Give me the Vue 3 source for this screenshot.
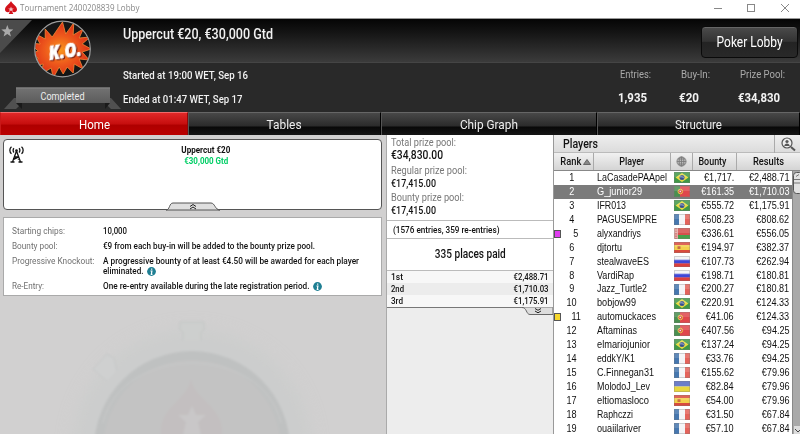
<script setup>
  import { ref } from 'vue';

  // squeeze a label horizontally so it takes the given width
  const vFit = {
    mounted(el, { value }) {
      const width = el.getBoundingClientRect().width;
      if (value && width) el.style.transform = `scaleX(${value / width})`;
    },
  };

  const stats = [
    { label: 'Entries:', value: '1,935', lw: 31, vw: 29 },
    { label: 'Buy-In:', value: '€20', lw: 29, vw: 20 },
    { label: 'Prize Pool:', value: '€34,830', lw: 45, vw: 42 },
  ];

  const activeTab = ref('Home');
  const tabs = [
    { name: 'Home', w: 31 },
    { name: 'Tables', w: 35 },
    { name: 'Chip Graph', w: 58 },
    { name: 'Structure', w: 47 },
  ];

  const pools = [
    { label: 'Total prize pool:', value: '€34,830.00', lw: 65, vw: 52 },
    { label: 'Regular prize pool:', value: '€17,415.00', lw: 76, vw: 45 },
    { label: 'Bounty prize pool:', value: '€17,415.00', lw: 73, vw: 45 },
  ];

  const places = [
    { place: '1st', prize: '€2,488.71', w: 12 },
    { place: '2nd', prize: '€1,710.03', w: 13 },
    { place: '3rd', prize: '€1,175.91', w: 12 },
  ];

  const players = [
    { name: 'LaCasadePAApel', w: 70, flag: 'br', bounty: '€1,717.', result: '€2,488.71' },
    { name: 'G_junior29', w: 45, flag: 'pt', bounty: '€161.35', result: '€1,710.03', selected: true },
    { name: 'IFR013', w: 29, flag: 'br', bounty: '€555.72', result: '€1,175.91' },
    { name: 'PAGUSEMPRE', w: 60, flag: 'fr', bounty: '€508.23', result: '€808.62' },
    { name: 'alyxandriys', w: 44, flag: 'by', bounty: '€336.61', result: '€556.05', mark: 'purple' },
    { name: 'djtortu', w: 25, flag: 'es', bounty: '€194.97', result: '€382.37' },
    { name: 'stealwaveES', w: 52, flag: 'ru', bounty: '€107.73', result: '€262.94' },
    { name: 'VardiRap', w: 37, flag: 'ru', bounty: '€198.71', result: '€180.81' },
    { name: 'Jazz_Turtle2', w: 50, flag: 'fr', bounty: '€200.27', result: '€180.81' },
    { name: 'bobjow99', w: 39, flag: 'br', bounty: '€220.91', result: '€124.33' },
    { name: 'automuckaces', w: 59, flag: 'pt', bounty: '€41.06', result: '€124.33', mark: 'yellow' },
    { name: 'Aftaminas', w: 40, flag: 'pt', bounty: '€407.56', result: '€94.25' },
    { name: 'elmariojunior', w: 53, flag: 'br', bounty: '€137.24', result: '€94.25' },
    { name: 'eddkY/K1', w: 38, flag: 'fr', bounty: '€33.76', result: '€94.25' },
    { name: 'C.Finnegan31', w: 57, flag: 'fr', bounty: '€155.62', result: '€79.96' },
    { name: 'MolodoJ_Lev', w: 53, flag: 'ua', bounty: '€82.84', result: '€79.96' },
    { name: 'eltiomasloco', w: 52, flag: 'es', bounty: '€54.00', result: '€79.96' },
    { name: 'Raphczzi', w: 36, flag: 'fr', bounty: '€31.50', result: '€67.84' },
    { name: 'ouaiilariver', w: 44, flag: 'fr', bounty: '€57.10', result: '€67.84' },
  ];
</script>

<template>
  <div class="window">
    <div class="titlebar">
      <svg class="spade" width="12" height="14" viewBox="0 0 12 14">
        <path d="M6 0C7 3 12 5 12 8.500c0 3-3.500 3.500-5 1.800L8.300 13H3.700L5 10.300C3.500 12 0 11.500 0 8.500 0 5 5 3 6 0Z" fill="#d3121b" />
        <path d="M6 5.500l.8 2h2l-1.600 1.200.6 1.900L6 9.500l-1.800 1.100.6-1.900L3.200 7.500h2Z" fill="#fff" opacity=".75" />
      </svg>
      <span v-fit="119.5" class="t title">Tournament 2400208839 Lobby</span>
      <svg class="controls" width="78" height="10" viewBox="0 0 78 10" fill="none" stroke="#888" stroke-width="1">
        <path d="M1 5.500h8M68 1l8 8M76 1l-8 8" />
        <rect x="34.500" y="1.500" width="7" height="7" />
      </svg>
    </div>

    <header class="header">
      <div class="brand">
        <svg width="122" height="92" viewBox="0 0 122 92">
          <defs>
            <radialGradient id="boom">
              <stop offset="0" stop-color="#f9961c" />
              <stop offset=".5" stop-color="#ee5a1c" />
              <stop offset="1" stop-color="#dc2e17" />
            </radialGradient>
            <linearGradient id="ribbon" x2="0" y2="1">
              <stop offset="0" stop-color="#737373" />
              <stop offset="1" stop-color="#5c5c5c" />
            </linearGradient>
            <clipPath id="disc"><circle cx="62.500" cy="29" r="27.500" /></clipPath>
          </defs>
          <path d="M0 0h32L0 33Z" fill="#4b4b4b" />
          <path d="M7.300 5l1.600 4.200 4.400.2-3.500 2.800 1.200 4.300-3.700-2.400-3.700 2.400 1.200-4.300L1.300 9.400l4.400-.2Z" fill="#aaa" />
          <circle cx="62.500" cy="29" r="27.500" fill="#151515" />
          <path clip-path="url(#disc)" d="M62.500 2l3.200 12 8-11-.5 12 10-6-4 9 11-1-8 7 9 5-9 3 7 8-10-1 4 10-9-5-1 9-6-6-4 7-4-7-6 11-2-10-10 6 2-10-10 2 5-8-9-4 9-3-9-8 11 1-6-11 11 6 0-10 7 8Z" fill="url(#boom)" stroke="#f58a35" stroke-width=".8" />
          <circle cx="62.500" cy="29" r="27.800" fill="none" stroke="#9c9c9c" stroke-width="1.200" />
          <g transform="rotate(-8 64 31)">
            <text x="48.500" y="38" textLength="33" lengthAdjust="spacingAndGlyphs" class="ko">K.O.</text>
          </g>
          <path d="M4 89l10-11h8v5l-6 6ZM121 89l-10-11h-6v5l6 6Z" fill="#505050" />
          <path d="M16 83l6 6v-6ZM110 83l-5 6v-6Z" fill="#191919" />
          <path d="M16 67.500h94v15.500H16Z" fill="url(#ribbon)" />
          <path d="M16 68h94" stroke="#858585" />
          <text x="40.500" y="79.500" textLength="44" lengthAdjust="spacingAndGlyphs" class="completed">Completed</text>
        </svg>
      </div>
      <div class="about">
        <div class="name"><span v-fit="150" class="t">Uppercut €20, €30,000 Gtd</span></div>
        <div class="when"><span v-fit="125" class="t">Started at 19:00 WET, Sep 16</span></div>
        <div class="when"><span v-fit="119.5" class="t">Ended at 01:47 WET, Sep 17</span></div>
      </div>
      <div class="summary">
        <button class="lobby"><span v-fit="66" class="t">Poker Lobby</span></button>
        <div class="stats">
          <div v-for="s in stats" :key="s.label" class="stat">
            <div class="stat-label"><span v-fit="s.lw" class="t">{{ s.label }}</span></div>
            <div class="stat-value"><span v-fit="s.vw" class="t">{{ s.value }}</span></div>
          </div>
        </div>
      </div>
    </header>

    <nav class="tabs">
      <div
        v-for="tab in tabs"
        :key="tab.name"
        class="tab"
        :class="{ active: tab.name === activeTab }"
        @click="activeTab = tab.name"
      >
        <span v-fit="tab.w" class="t">{{ tab.name }}</span>
      </div>
    </nav>

    <main class="content">
      <section class="left">
        <svg class="watch" width="386" height="140" viewBox="0 0 386 140">
          <defs>
            <filter id="soft"><feGaussianBlur stdDeviation="1" /></filter>
            <filter id="glow" x="-50%" y="-50%" width="200%" height="200%"><feGaussianBlur stdDeviation="9" /></filter>
          </defs>
          <circle cx="192" cy="154" r="119" fill="#c8cbca" opacity=".6" filter="url(#glow)" />
          <g filter="url(#soft)">
            <path d="M180 27h24v8l-3 2v10h-18V37l-3-2Z" fill="#cdcfce" stroke="#c3c5c4" />
            <path d="M93 74l14-15 7 4 3 14-9 10Z" fill="#cfd0d0" stroke="#c5c7c7" />
            <circle cx="192" cy="154" r="109" fill="#cccdcd" />
            <circle cx="192" cy="154" r="98" fill="#bfc1c1" />
            <circle cx="192" cy="154" r="89" fill="#c3c3c3" />
            <path d="M103 128C122 48 262 48 281 128" fill="none" stroke="#c9caca" />
            <path d="M191 84c3 20 31 28 31 52v8h-61v-8c0-24 27-32 30-52Z" fill="#c3bfc0" />
            <path d="M192 111l4 9h10l-8 7 3 13h-18l3-13-8-7h10Z" fill="#c9c7c8" />
          </g>
        </svg>

        <div class="card">
          <svg class="antenna" width="15" height="17" viewBox="0 0 15 17" fill="none" stroke="#111" stroke-width="1.300">
            <path d="M7.500 5L3.500 16M7.500 5l4 11M5.500 11h4M4.200 13.700l5.500-2.700M10.800 13.700l-5-2.700M1.500 16h4M9.500 16h4" />
            <path d="M2.500.8C.3 2.500.3 6 2.500 7.800M5 2.200C3.800 3.200 3.800 5.300 5 6.400M12.500.8c2.200 1.700 2.200 5.200 0 7M10 2.200c1.200 1 1.200 3.100 0 4.200" />
            <circle cx="7.500" cy="4.500" r="1.300" fill="#111" stroke="none" />
          </svg>
          <div class="card-title"><span v-fit="49" class="t">Uppercut €20</span></div>
          <div class="card-gtd"><span v-fit="44" class="t">€30,000 Gtd</span></div>
          <svg class="handle" width="54" height="9" viewBox="0 0 54 9">
            <path d="M0 8c4 0 3-7 7-7h38c4 0 4 7 9 7Z" fill="#dfdfdf" stroke="#555" />
            <path d="M24 4.500l3-2 3 2M24 7l3-2 3 2" fill="none" stroke="#222" />
          </svg>
        </div>

        <dl class="facts">
          <dt><span v-fit="53" class="t">Starting chips:</span></dt>
          <dd><span v-fit="24" class="t">10,000</span></dd>
          <dt><span v-fit="45.5" class="t">Bounty pool:</span></dt>
          <dd><span v-fit="212" class="t">€9 from each buy-in will be added to the bounty prize pool.</span></dd>
          <dt><span v-fit="82.5" class="t">Progressive Knockout:</span></dt>
          <dd>
            <div><span v-fit="256" class="t">A progressive bounty of at least €4.50 will be awarded for each player</span></div>
            <div class="with-info second">
              <span v-fit="40.5" class="t">eliminated.</span>
              <svg class="info" width="9" height="9" viewBox="0 0 9 9">
                <circle cx="4.500" cy="4.500" r="4.400" fill="#1f7f93" />
                <path d="M3.500 4h1.400L4.300 7.300h1.200M4.700 1.600v1.200" stroke="#fff" stroke-width="1.200" fill="none" />
              </svg>
            </div>
          </dd>
          <dt><span v-fit="32" class="t">Re-Entry:</span></dt>
          <dd class="with-info third">
            <span v-fit="206.5" class="t">One re-entry available during the late registration period.</span>
            <svg class="info" width="9" height="9" viewBox="0 0 9 9">
              <circle cx="4.500" cy="4.500" r="4.400" fill="#1f7f93" />
              <path d="M3.500 4h1.400L4.300 7.300h1.200M4.700 1.600v1.200" stroke="#fff" stroke-width="1.200" fill="none" />
            </svg>
          </dd>
        </dl>
      </section>

      <section class="middle">
        <div class="pools">
          <template v-for="(p, i) in pools" :key="p.label">
            <div class="pool-label"><span v-fit="p.lw" class="t">{{ p.label }}</span></div>
            <div class="pool-value" :class="{ big: i === 0 }"><span v-fit="p.vw" class="t">{{ p.value }}</span></div>
          </template>
        </div>
        <div class="entries"><span v-fit="106.5" class="t">(1576 entries, 359 re-entries)</span></div>
        <div class="paid"><span v-fit="71" class="t">335 places paid</span></div>
        <div class="places">
          <div v-for="p in places" :key="p.place" class="place">
            <span v-fit="p.w" class="t">{{ p.place }}</span>
            <span v-fit="35" class="t right">{{ p.prize }}</span>
          </div>
        </div>
        <svg class="more" width="31" height="9" viewBox="0 0 31 9">
          <path d="M0 .5c5 0 4 7 8 7h23V.5" fill="#ddd" stroke="#666" />
          <path d="M13 1.500l3 1.800 3-1.800M13 4l3 1.800 3-1.800" fill="none" stroke="#222" />
        </svg>
      </section>

      <section class="right-col">
        <div class="players-head">
          <span v-fit="35" class="t">Players</span>
          <svg class="search" width="26" height="18" viewBox="0 0 26 18">
            <path d="M.5 0v18" stroke="#aaa" />
            <circle cx="13" cy="8" r="5" fill="#eee" stroke="#555" stroke-width="1.200" />
            <circle cx="13" cy="6.500" r="1.600" fill="#555" />
            <path d="M10.300 11c0-3.500 5.400-3.500 5.400 0" fill="#555" />
            <path d="M17 12l4 3.500" stroke="#555" stroke-width="2" />
          </svg>
        </div>
        <div class="cols head">
          <div class="th rank-h">
            <span v-fit="21" class="t">Rank</span>
            <svg width="8" height="6" viewBox="0 0 8 6"><path d="M.5 5.500L4 .5l3.500 5Z" fill="#888" stroke="#666" /></svg>
          </div>
          <div class="th"><span v-fit="25" class="t">Player</span></div>
          <div class="th">
            <svg width="11" height="11" viewBox="0 0 11 11" fill="#bbb" stroke="#777" stroke-width=".8">
              <circle cx="5.500" cy="5.500" r="4.600" />
              <path d="M1 5.500h9M5.500 1v9M2 3h7M2 8h7" />
              <ellipse cx="5.500" cy="5.500" rx="2.300" ry="4.600" fill="none" />
            </svg>
          </div>
          <div class="th bounty-h"><span v-fit="28" class="t">Bounty</span></div>
          <div class="th results-h"><span v-fit="31" class="t">Results</span></div>
        </div>
        <div class="list">
          <div class="rows">
            <div v-for="(p, i) in players" :key="p.name" class="cols row" :class="{ selected: p.selected }">
              <div class="rank" :class="{ marked: p.mark }">
                <i v-if="p.mark" class="mark" :class="p.mark"></i>
                <span class="t narrow">{{ i + 1 }}</span>
              </div>
              <div class="player"><span v-fit="p.w" class="t">{{ p.name }}</span></div>
              <svg class="flag" width="16" height="11" viewBox="0 0 16 11">
                <template v-if="p.flag === 'br'">
                  <path d="M0 0h16v11H0Z" fill="#409847" />
                  <path d="M1.500 5.500L8 1l6.500 4.500L8 10Z" fill="#e8dc45" />
                  <circle cx="8" cy="5.500" r="2.500" fill="#38508f" />
                  <path d="M5.800 5c2-.4 3.500.2 4.400 1.300" stroke="#cfd8de" stroke-width=".6" fill="none" />
                </template>
                <template v-else-if="p.flag === 'pt'">
                  <path d="M0 0h16v11H0Z" fill="#e0474d" />
                  <path d="M0 0h6v11H0Z" fill="#4a8f50" />
                  <circle cx="6.300" cy="5.500" r="2.300" fill="#dd504d" stroke="#e6c54a" />
                  <circle cx="6.300" cy="5.500" r=".8" fill="#eee" />
                </template>
                <template v-else-if="p.flag === 'fr'">
                  <path d="M0 0h16v11H0Z" fill="#f4f4f6" />
                  <path d="M0 0h5v11H0Z" fill="#4677af" />
                  <path d="M11 0h5v11h-5Z" fill="#e4635b" />
                </template>
                <template v-else-if="p.flag === 'by'">
                  <path d="M0 0h16v7H0Z" fill="#d6504d" />
                  <path d="M0 7h16v4H0Z" fill="#49a04b" />
                  <path d="M0 0h4v11H0Z" fill="#e4aaa6" />
                  <path d="M2 0v11" stroke="#ca5a56" stroke-dasharray="1.500 1" />
                </template>
                <template v-else-if="p.flag === 'es'">
                  <path d="M0 0h16v11H0Z" fill="#d94a3d" />
                  <path d="M0 3h16v5H0Z" fill="#f3cf4b" />
                  <path d="M3.500 4h3v3h-3Z" fill="#c9703f" />
                </template>
                <template v-else-if="p.flag === 'ru'">
                  <path d="M0 0h16v4H0Z" fill="#f3f3f5" />
                  <path d="M0 3.700h16v4H0Z" fill="#3f48d8" />
                  <path d="M0 7.400h16V11H0Z" fill="#dc3f3d" />
                </template>
                <template v-else>
                  <path d="M0 0h16v5.500H0Z" fill="#5468c0" />
                  <path d="M0 5.500h16V11H0Z" fill="#e9d63e" />
                </template>
                <path d="M0 0h16v5H0Z" fill="#fff" opacity=".14" />
                <path d="M.5.500h15v10H.5Z" fill="none" stroke="#777" opacity=".3" />
              </svg>
              <div class="num"><span class="t right narrow">{{ p.bounty }}</span></div>
              <div class="num"><span class="t right narrow">{{ p.result }}</span></div>
            </div>
          </div>
          <svg class="scroll" width="8" height="264" viewBox="0 0 8 264">
            <path d="M0 0h8v264H0Z" fill="#a9a9a9" />
            <path d="M.5 0v264" stroke="#888" />
            <rect x="1.500" y="1.500" width="9" height="21" rx="3" fill="#e2e2e2" stroke="#555" />
            <path d="M4 5.500l3-2M2 8.500h6M2 12h6" stroke="#777" />
            <path d="M2 255h6v9H2Z" fill="#ddd" />
            <path d="M3 258l3 3 3-3" fill="none" stroke="#444" />
          </svg>
        </div>
      </section>
    </main>
  </div>
</template>

<style>
  body {
    margin: 0;
    overflow: hidden;
  }
</style>

<style scoped>
  .window {
    width: 800px;
    height: 434px;
    overflow: hidden;
    display: flex;
    flex-direction: column;
    background: #fff;
    font-family: Roboto, 'Liberation Sans', sans-serif;
    color: #111;
  }

  .t {
    display: inline-block;
    flex: none;
    white-space: nowrap;
    transform-origin: left center;
  }
  .t.right {
    transform-origin: right center;
  }

  .titlebar {
    height: 19px;
    flex: none;
    display: flex;
    align-items: center;
    padding: 0 9px 0 5px;
    border-bottom: 1px solid #999;
    box-sizing: border-box;
    font-family: 'Open Sans', sans-serif;
    font-size: 9.5px;
    color: #888;
  }
  .spade {
    margin-top: -3px;
  }
  .title {
    margin: -3px 0 0 3px;
  }
  .controls {
    margin: -3px 0 0 auto;
  }

  .header {
    height: 93px;
    flex: none;
    display: flex;
    color: #f2f2f2;
    background: linear-gradient(#050505, #141414 13px, #3b3b3b 43px, #454545 43px, #454545 44px, #292929 44px);
  }
  .brand {
    width: 123px;
    height: 92px;
    padding-top: 1px;
  }
  .ko {
    font: italic 800 19px 'Open Sans', sans-serif;
    fill: #fff;
    stroke: #fff;
    stroke-width: 0.7px;
    filter: drop-shadow(1px 1px 0 #70180c);
  }
  .completed {
    font-size: 10.5px;
    fill: #eee;
  }
  .about {
    flex: 1;
    line-height: 16px;
  }
  .name {
    margin: 7px 0 27px;
    font-size: 14px;
    font-weight: 500;
  }
  .when {
    font-size: 11px;
    line-height: 13px;
    margin-bottom: 11px;
    font-weight: 500;
  }
  .summary {
    width: 182px;
    display: flex;
    flex-direction: column;
  }
  .lobby {
    align-self: flex-end;
    width: 97px;
    height: 32px;
    margin: 7px 2px 0 0;
    padding: 0;
    border: 1px solid #0a0a0a;
    border-radius: 4px;
    color: #fff;
    font: 14px Roboto, sans-serif;
    background: linear-gradient(#4b4b4b, #333 48%, #232323 50%, #292929);
    box-shadow: inset 0 1px #666;
  }
  .lobby .t,
  .tab .t,
  .th .t,
  .paid .t,
  .card-title .t,
  .card-gtd .t,
  .rank .t {
    transform-origin: center;
  }
  .stats {
    display: grid;
    grid-template-columns: 61px 59px 62px;
    padding-top: 11px;
  }
  .stat-label {
    height: 13px;
    padding-left: 2px;
    line-height: 12px;
    font-size: 10.5px;
    color: #aaa;
  }
  .stat-value {
    margin-top: 8px;
    line-height: 15px;
    font-size: 12.5px;
    font-weight: 700;
  }

  .tabs {
    height: 23px;
    flex: none;
    display: grid;
    grid-template-columns: 188px 193px 216px 203px;
    background: #111;
  }
  .tab {
    display: flex;
    justify-content: center;
    align-items: center;
    box-sizing: border-box;
    border-left: 1px solid #555;
    border-right: 1px solid #000;
    border-top: 1px solid #666;
    font-size: 13px;
    color: #eee;
    background: linear-gradient(#484848, #2b2b2b 13px, #080808 14px, #151515);
  }
  .tab.active {
    border-color: #f06a6a #8e0808 #8e0808 #c91818;
    background: linear-gradient(#e02828, #c60e0e 50%, #ae0000 55%, #ba0000);
    color: #fff;
  }

  .content {
    flex: 1;
    min-height: 0;
    display: grid;
    grid-template-columns: 386px 167px 247px;
  }

  .left {
    position: relative;
    padding: 4px 4px 0 3px;
    background: #d1d0d0;
    box-sizing: border-box;
  }
  .watch {
    position: absolute;
    left: 0;
    bottom: 0;
  }
  .card {
    position: relative;
    width: 379px;
    height: 71px;
    padding-top: 4px;
    box-sizing: border-box;
    border: 1px solid #555;
    border-radius: 4px;
    background: #fff;
    text-align: center;
    font-weight: 700;
    font-size: 9.5px;
    line-height: 11px;
  }
  .antenna {
    position: absolute;
    left: 5px;
    top: 6px;
  }
  .card-title,
  .card-gtd {
    display: flex;
    justify-content: center;
    padding-left: 27px;
  }
  .card-gtd {
    color: #00cf66;
  }
  .handle {
    position: absolute;
    left: 162px;
    bottom: -2px;
  }

  .facts {
    position: relative;
    width: 379px;
    height: 79px;
    margin: 7px 0 0;
    padding: 6px 0 0 8px;
    box-sizing: border-box;
    border: 1px solid #aaa;
    background: #fff;
    display: grid;
    grid-template-columns: 91px 1fr;
    grid-template-rows: 15px 15px 25px 14px;
    font-size: 9.5px;
    line-height: 14px;
  }
  .facts dt {
    color: #707070;
  }
  .facts dd {
    margin: 0;
    font-weight: 500;
  }
  .second {
    margin-top: -4px;
  }
  .with-info {
    display: grid;
    grid-template-columns: 43.5px 9px;
    align-items: center;
    justify-items: start;
  }
  .facts .third {
    grid-template-columns: 209.5px 9px;
  }

  .middle {
    position: relative;
    border-left: 1px solid #aaa;
    background: #ededed;
  }
  .pools,
  .entries,
  .paid {
    background: #fff;
    border-bottom: 1px solid #bbb;
    box-sizing: border-box;
  }
  .pools {
    height: 86px;
    padding: 2px 0 0 4px;
    font-size: 10.5px;
  }
  .pool-label {
    height: 12px;
    line-height: 12px;
    color: #777;
  }
  .pool-value {
    height: 14.5px;
    line-height: 13px;
    font-size: 11px;
    font-weight: 500;
  }
  .pool-value.big {
    height: 16px;
    font-size: 12px;
  }
  .entries {
    height: 18px;
    padding-left: 6px;
    font-size: 9.5px;
    font-weight: 500;
    line-height: 17px;
  }
  .paid {
    height: 32px;
    display: flex;
    justify-content: center;
    font-size: 12px;
    font-weight: 500;
    line-height: 30px;
  }
  .places {
    border-bottom: 1px solid #777;
  }
  .place {
    height: 12px;
    padding: 0 4px;
    display: flex;
    justify-content: space-between;
    background: #f7f7f7;
    font-size: 9.5px;
    font-weight: 500;
    line-height: 12px;
  }
  .place:nth-child(even) {
    background: #ececec;
  }
  .more {
    position: absolute;
    right: 0;
    top: 172px;
  }

  .right-col {
    min-width: 0;
    border-left: 1px solid #999;
    background: #fff;
  }
  .players-head {
    height: 18px;
    display: flex;
    justify-content: space-between;
    padding-left: 9px;
    background: linear-gradient(#eee, #dcdcdc);
    font-size: 12px;
    font-weight: 500;
    line-height: 19px;
    border-bottom: 1px solid #bbb;
    box-sizing: border-box;
  }
  .cols {
    display: grid;
    grid-template-columns: 40px 77px 22px 44px 63px;
  }
  .head {
    height: 18px;
    box-sizing: border-box;
    background: linear-gradient(#f1f1f1, #d4d4d4);
    border-bottom: 1px solid #888;
    font-size: 10.5px;
    font-weight: 500;
  }
  .th {
    display: flex;
    justify-content: center;
    align-items: center;
    border-right: 1px solid #aaa;
  }
  .th:last-child {
    border-right: 0;
  }
  .rank-h {
    padding-left: 3px;
    gap: 1px;
  }
  .bounty-h {
    padding-right: 4px;
  }

  .list {
    display: flex;
  }
  .rows {
    width: 238px;
    flex: none;
  }
  .scroll {
    flex: none;
  }
  .row {
    grid-template-columns: 43px 77px 16px 44px 55.5px;
    height: 13.92px;
    line-height: 13.5px;
    font-family: 'Liberation Sans', Arial, sans-serif;
    font-size: 10px;
    align-items: center;
  }
  .row.selected {
    background: #7b7b7b;
    color: #fff;
  }
  .rank {
    position: relative;
    text-align: center;
    padding-right: 7px;
  }
  .rank.marked {
    padding: 0 0 0 1px;
  }
  .mark {
    position: absolute;
    left: 0;
    top: 3px;
    width: 5px;
    height: 6px;
    border: 1px solid #555;
  }
  .purple {
    background: #e03df0;
  }
  .yellow {
    background: #f6d72c;
  }
  .narrow {
    transform: scaleX(0.91);
  }
  .flag {
    display: block;
  }
  .num {
    text-align: right;
  }
</style>
